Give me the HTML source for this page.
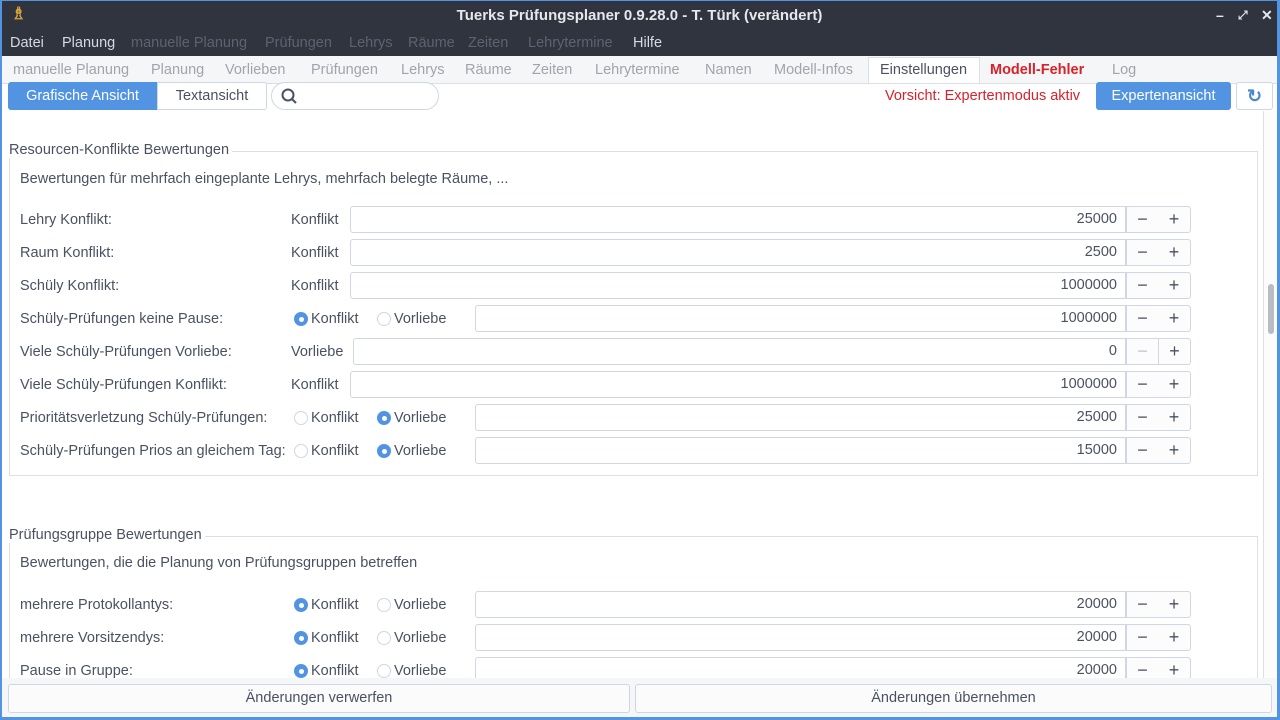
<!DOCTYPE html>
<html><head><meta charset="utf-8"><style>
*{margin:0;padding:0;box-sizing:border-box}
body{width:1280px;height:720px;overflow:hidden;background:#5294e2;font-family:"Liberation Sans",sans-serif;font-size:14.5px;color:#4b5162;position:relative}
.a{position:absolute;white-space:nowrap}
#win{position:absolute;left:2px;top:1px;width:1275px;height:716px;background:#f5f6f7}
#title{position:absolute;left:0;top:0;width:1275px;height:30px;background:#2f343f;color:#e5e8ec;font-weight:bold;font-size:15px;text-align:center;line-height:29px}
#menu{position:absolute;left:0;top:30px;width:1275px;height:25px;background:#2f343f;font-size:14.5px}
#menu span{position:absolute;top:4px;color:#5d6270}
.tab{position:absolute;top:61px;color:#a0a4ac}
.content{position:absolute;left:0;top:110px;width:1261px;height:567px;background:#fff;overflow:hidden}
.grp{position:absolute;border:1px solid #dcdfe3}
.lbl{position:absolute}
.inp{position:absolute;height:27px;border:1px solid #cfd6e6;border-radius:3px 0 0 3px;background:#fff;text-align:right;padding-right:8px;line-height:25px}
.spin{position:absolute;width:65px;height:27px;border:1px solid #cfd6e6;border-left:none;border-radius:0 3px 3px 0;background:#fcfcfc}
.spin b{position:absolute;top:0;width:32px;text-align:center;font-weight:normal;font-size:18px;line-height:25px;color:#4b5162}
.spin b.m{left:0;border-left:1px solid #cfd6e6}.spin b.p{left:32px}
.r{position:absolute;width:14px;height:14px;border-radius:50%;border:1px solid #cfd6e6;background:#fff}
.r.on{background:#5294e2;border-color:#5294e2}
.r.on:after{content:"";position:absolute;left:3.5px;top:3.5px;width:5px;height:5px;border-radius:50%;background:#fff}
.btn{position:absolute;height:29px;border:1px solid #cfd6e6;border-radius:3px;background:#fbfbfc;text-align:center;line-height:27px}
</style></head><body>
<div id="win">
<div id="title">Tuerks Prüfungsplaner 0.9.28.0 - T. Türk (verändert)
<span class="a" style="left:9px;top:-2px;color:#d9a43a;font-size:17px">♗</span>
<span class="a" style="left:1214px;top:0;font-size:14px">–</span>
<span class="a" style="left:1236px;top:0;font-size:12px">⤢</span>
<span class="a" style="left:1259px;top:0;font-size:14px">✕</span>
</div>
<div id="menu">
<span style="left:8px;color:#d3dae3">Datei</span><span style="left:60px;color:#d3dae3">Planung</span>
<span style="left:129px">manuelle Planung</span><span style="left:263px">Prüfungen</span><span style="left:347px">Lehrys</span><span style="left:406px">Räume</span><span style="left:466px">Zeiten</span><span style="left:526px">Lehrytermine</span><span style="left:631px;color:#d3dae3">Hilfe</span>
</div>
<div class="a" style="left:866px;top:56px;width:112px;height:26px;background:#fff;border:1px solid #dcdfe3;border-bottom:none"></div>
<span class="tab" style="left:11px">manuelle Planung</span><span class="tab" style="left:149px">Planung</span><span class="tab" style="left:223px">Vorlieben</span><span class="tab" style="left:309px">Prüfungen</span><span class="tab" style="left:399px">Lehrys</span><span class="tab" style="left:463px">Räume</span><span class="tab" style="left:530px">Zeiten</span><span class="tab" style="left:593px">Lehrytermine</span><span class="tab" style="left:703px">Namen</span><span class="tab" style="left:772px">Modell-Infos</span>
<span class="tab" style="left:878px;color:#4b5162">Einstellungen</span><span class="tab" style="left:988px;color:#d8212a;font-weight:bold">Modell-Fehler</span><span class="tab" style="left:1110px">Log</span>
<div class="a" style="left:0;top:82px;width:1275px;height:28px;background:#fff;border-top:1px solid #dcdfe3"></div>
<div class="a" style="left:6px;top:81px;width:149px;height:28px;background:#5294e2;color:#fff;text-align:center;line-height:28px;border-radius:3px 0 0 3px">Grafische Ansicht</div>
<div class="a" style="left:155px;top:81px;width:110px;height:28px;border:1px solid #cfd6e6;border-radius:0 3px 3px 0;background:#fff;text-align:center;line-height:26px">Textansicht</div>
<div class="a" style="left:269px;top:81px;width:168px;height:28px;border:1px solid #cfd6e6;border-radius:14px;background:#fff"><svg width="20" height="20" style="position:absolute;left:8px;top:4px"><circle cx="8" cy="8" r="5.5" fill="none" stroke="#4b5162" stroke-width="2"/><path d="M12 12l4 4" stroke="#4b5162" stroke-width="2"/></svg></div>
<span class="a" style="left:883px;top:87px;color:#d8212a">Vorsicht: Expertenmodus aktiv</span>
<div class="a" style="left:1094px;top:81px;width:135px;height:28px;background:#5294e2;color:#fff;text-align:center;line-height:28px;border-radius:3px">Expertenansicht</div>
<div class="a" style="left:1234px;top:81px;width:37px;height:28px;border:1px solid #cfd6e6;border-radius:3px;background:#fff;text-align:center;line-height:26px;color:#4a88d0;font-size:18px;font-weight:bold">↻</div>

<div class="content">
<div class="grp" style="left:7px;top:40px;width:1249px;height:325px"></div>
<span class="a" style="left:7px;top:31px;background:#fff;padding-right:3px">Resourcen-Konflikte Bewertungen</span>
<span class="a" style="left:18px;top:60px">Bewertungen für mehrfach eingeplante Lehrys, mehrfach belegte Räume, ...</span>
<div class="grp" style="left:7px;top:425px;width:1249px;height:200px"></div>
<span class="a" style="left:7px;top:416px;background:#fff;padding-right:3px">Prüfungsgruppe Bewertungen</span>
<span class="a" style="left:18px;top:444px">Bewertungen, die die Planung von Prüfungsgruppen betreffen</span>
<div id="rows"></div>
</div>
<div class="a" style="left:1261px;top:110px;width:14px;height:567px;background:#fcfcfc;border-left:1px solid #dcdfe3"><div class="a" style="left:4px;top:173px;width:6px;height:50px;border-radius:3px;background:#b8bcc3"></div></div>
<div class="btn" style="left:6px;top:683px;width:622px">Änderungen verwerfen</div>
<div class="btn" style="left:633px;top:683px;width:637px">Änderungen übernehmen</div>
</div>
<script>
var rows=[
[108,"Lehry Konflikt:","K","25000"],[141,"Raum Konflikt:","K","2500"],[174,"Schüly Konflikt:","K","1000000"],
[207,"Schüly-Prüfungen keine Pause:","R1","1000000"],[240,"Viele Schüly-Prüfungen Vorliebe:","V","0"],
[273,"Viele Schüly-Prüfungen Konflikt:","K","1000000"],[306,"Prioritätsverletzung Schüly-Prüfungen:","R2","25000"],
[339,"Schüly-Prüfungen Prios an gleichem Tag:","R2","15000"],
[493,"mehrere Protokollantys:","R1","20000"],[526,"mehrere Vorsitzendys:","R1","20000"],[559,"Pause in Gruppe:","R1","20000"]];
var h="";
rows.forEach(function(r){var y=r[0];
h+='<span class="lbl" style="left:18px;top:'+(y-7)+'px">'+r[1]+'</span>';
var x=348;
if(r[2]=="K"){h+='<span class="lbl" style="left:289px;top:'+(y-7)+'px">Konflikt</span>';}
else if(r[2]=="V"){h+='<span class="lbl" style="left:289px;top:'+(y-7)+'px">Vorliebe</span>';x=351;}
else{var k=r[2]=="R1";x=473;
h+='<div class="r'+(k?' on':'')+'" style="left:292px;top:'+(y-6)+'px"></div><span class="lbl" style="left:309px;top:'+(y-7)+'px">Konflikt</span>';
h+='<div class="r'+(k?'':' on')+'" style="left:375px;top:'+(y-6)+'px"></div><span class="lbl" style="left:392px;top:'+(y-7)+'px">Vorliebe</span>';}
h+='<div class="inp" style="left:'+x+'px;top:'+(y-13)+'px;width:'+(1124-x)+'px">'+r[3]+'</div>';
h+='<div class="spin" style="left:1124px;top:'+(y-13)+'px"><b class="m"'+(r[3]=="0"?' style="color:#c0c4cb"':'')+'>−</b><b class="p"'+(r[3]=="0"?' style="border-left:1px solid #cfd6e6"':'')+'>+</b></div>';
});
document.getElementById("rows").outerHTML=h;
</script>
</body></html>
